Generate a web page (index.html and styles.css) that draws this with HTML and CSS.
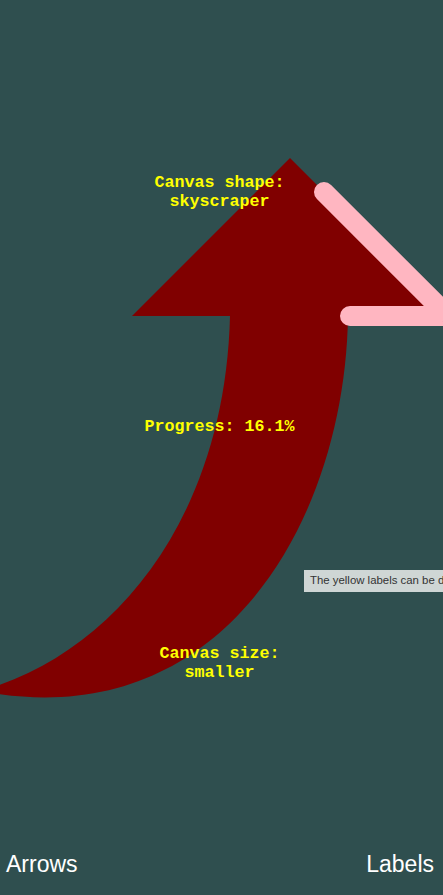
FILE: index.html
```html
<!DOCTYPE html>
<html lang="en">
<head>
<meta charset="utf-8">
<title>Arrows and Labels</title>
<link rel="stylesheet" href="styles.css">
</head>
<body>
<div class="app">
  <div class="stage">
    <svg class="canvas" width="443" height="851" viewBox="0 0 443 851" xmlns="http://www.w3.org/2000/svg">
      <path class="red-arrow" d="M290,158 L448,316 L348,316 C345,520 222,738 -20,691 C112,655 225,520 230,316 L132,316 Z"/>
      <polyline class="pink-arrow" points="324,192 448,316 350,316"/>
      <text class="label" x="219.5" y="187">Canvas shape:</text>
      <text class="label" x="219.5" y="206">skyscraper</text>
      <text class="label" x="219.5" y="431">Progress: 16.1%</text>
      <text class="label" x="219.5" y="658">Canvas size:</text>
      <text class="label" x="219.5" y="677">smaller</text>
    </svg>
    <div class="tooltip">The yellow labels can be dragged</div>
  </div>
  <footer class="footer">
    <span class="footer-item">Arrows</span>
    <span class="footer-item">Labels</span>
  </footer>
</div>
</body>
</html>
```

FILE: styles.css
```css
html, body {
  margin: 0;
  padding: 0;
  background: #2f4f4f;
  overflow: hidden;
}

.app {
  width: 443px;
  height: 895px;
  display: flex;
  flex-direction: column;
  overflow: hidden;
}

.stage {
  position: relative;
  flex: 1;
  overflow: hidden;
}

.canvas {
  display: block;
}

.red-arrow {
  fill: #800000;
}

.pink-arrow {
  fill: none;
  stroke: #ffb6c1;
  stroke-width: 20;
  stroke-linecap: round;
  stroke-linejoin: miter;
}

.label {
  fill: #ffff00;
  font-family: "Liberation Mono", "Courier New", monospace;
  font-weight: bold;
  font-size: 16.7px;
  text-anchor: middle;
}

.tooltip {
  position: absolute;
  left: 304px;
  top: 570px;
  height: 21.5px;
  line-height: 21.5px;
  padding: 0 6px;
  background: #cfd6d5;
  color: #333;
  font-family: "Liberation Sans", Arial, sans-serif;
  font-size: 11.4px;
  white-space: nowrap;
}

.footer {
  height: 44px;
  box-sizing: border-box;
  padding: 0 9px 18px 6px;
  display: flex;
  justify-content: space-between;
  align-items: flex-start;
  font-family: "Liberation Sans", Arial, sans-serif;
  font-size: 23px;
  line-height: 26px;
  color: #ffffff;
}
```
